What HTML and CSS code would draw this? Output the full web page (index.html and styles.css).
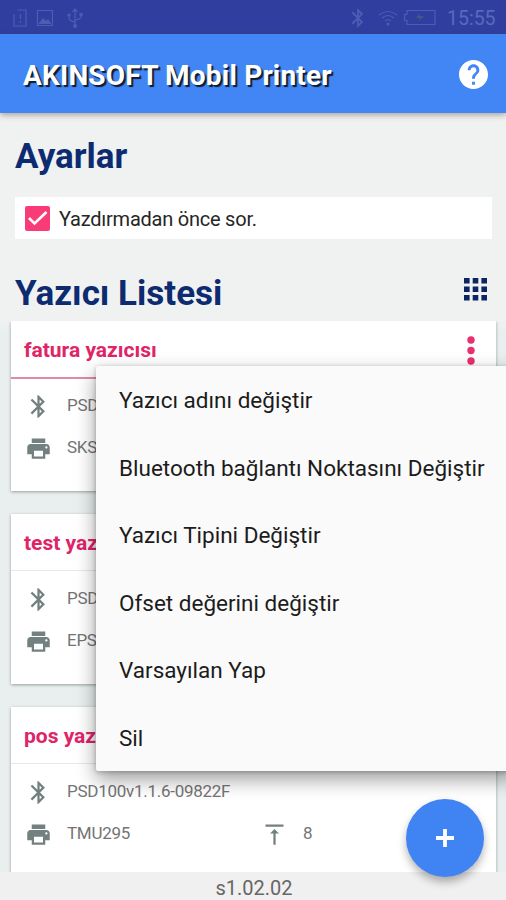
FILE: index.html
```html
<!DOCTYPE html>
<html lang="tr">
<head>
<meta charset="utf-8">
<title>AKINSOFT Mobil Printer</title>
<link rel="stylesheet" href="styles.css">
</head>
<body>
<svg class="defs" aria-hidden="true">
  <symbol id="bt" viewBox="0 0 24 24"><path d="M17.71 7.71L12 2h-1v7.59L6.41 5 5 6.41 10.59 12 5 17.59 6.41 19 11 14.41V22h1l5.71-5.71-4.3-4.29 4.3-4.29zM13 5.83l1.88 1.88L13 9.59V5.83zm1.88 10.46L13 18.17v-3.76l1.88 1.88z"/></symbol>
  <symbol id="printer" viewBox="0 0 24 24"><path d="M19 8H5c-1.66 0-3 1.34-3 3v6h4v4h12v-4h4v-6c0-1.66-1.34-3-3-3zm-3 11H8v-5h8v5zm3-7c-.55 0-1-.45-1-1s.45-1 1-1 1 .45 1 1-.45 1-1 1zm-1-9H6v4h12V3z"/></symbol>
  <symbol id="top" viewBox="0 0 24 24"><path d="M8 11h3v10h2V11h3l-4-4-4 4zM4 3v2h16V3H4z"/></symbol>
</svg>
<div class="screen">
  <header class="status">
    <svg class="s-sim" viewBox="0 0 16 20"><path d="M5.500 2H14v16H2V6M8.500 6v5M8.500 13v2"/></svg>
    <svg class="s-image" viewBox="0 0 18 18"><path d="M1.500 1.500h15v15h-15z"/><path class="solid" d="M3 14l4-5 3 3 2-2 3 4v1H3z"/></svg>
    <svg class="s-usb" viewBox="0 0 18 22"><path d="M9 3v16M3 8v3q0 3 6 4M15 7v3q0 2-6 3M6.500 5L9 2l2.500 3"/><circle class="solid" cx="9" cy="19" r="2"/><circle class="solid" cx="3" cy="8" r="1.600"/><path class="solid" d="M13.500 6h3v3h-3z"/></svg>
    <svg class="s-bt solid" viewBox="0 0 24 24"><use href="#bt"/></svg>
    <svg class="s-wifi" viewBox="0 0 22 18"><path d="M2 6q9-7 18 0M5 9q6-5 12 0M8 12q3-2.500 6 0"/><circle class="solid" cx="11" cy="15" r="1.500"/></svg>
    <svg class="s-battery" viewBox="0 0 34 17"><path d="M4 1.500h28v14H4v-4H1.500v-6H4z"/><path class="charge" d="M16 5l-3 4h4l-1 3 5-5h-4z"/></svg>
    <span class="clock">15:55</span>
  </header>
  <div class="toolbar">
    <h1>AKINSOFT Mobil Printer</h1>
    <svg class="help" viewBox="2 2 20 20"><path d="M12 2C6.480 2 2 6.480 2 12s4.480 10 10 10 10-4.480 10-10S17.520 2 12 2zm1 17h-2v-2h2v2zm2.070-7.750l-.9.920C13.450 12.900 13 13.500 13 15h-2v-.5c0-1.100.45-2.100 1.170-2.830l1.240-1.260c.37-.36.590-.86.590-1.410 0-1.100-.9-2-2-2s-2 .9-2 2H8c0-2.210 1.790-4 4-4s4 1.790 4 4c0 .88-.36 1.680-.93 2.250z"/></svg>
  </div>
  <main class="content">
    <h2 class="settings-title">Ayarlar</h2>
    <label class="setting">
      <svg class="check" viewBox="0 0 25 25"><rect width="25" height="25" rx="2"/><path d="M4 12l5.500 5.500L21.500 6"/></svg>
      <span>Yazdırmadan önce sor.</span>
    </label>
    <div class="list-head">
      <h2 class="list-title">Yazıcı Listesi</h2>
      <svg class="grid" viewBox="0 0 23 23"><path d="M0 0h5.600v5.600H0zM8.700 0h5.600v5.600H8.700zM17.400 0H23v5.600h-5.600zM0 8.500h5.600v5.600H0zM8.700 8.500h5.600v5.600H8.700zM17.400 8.500H23v5.600h-5.600zM0 17h5.600v5.600H0zM8.700 17h5.600v5.600H8.700zM17.400 17H23v5.600h-5.600z"/></svg>
    </div>
    <div class="cards">
      <section class="card active">
        <div class="card-head"><h3>fatura yazıcısı</h3><svg class="more" viewBox="0 0 8 29"><circle cx="4" cy="4" r="3.700"/><circle cx="4" cy="14.500" r="3.700"/><circle cx="4" cy="25" r="3.700"/></svg></div>
        <div class="row"><svg class="icon"><use href="#bt"/></svg><span>PSD</span></div>
        <div class="row"><svg class="icon"><use href="#printer"/></svg><span>SKS</span></div>
      </section>
      <section class="card">
        <div class="card-head"><h3>test yaz</h3></div>
        <div class="row"><svg class="icon"><use href="#bt"/></svg><span>PSD</span></div>
        <div class="row"><svg class="icon"><use href="#printer"/></svg><span>EPS</span></div>
      </section>
      <section class="card">
        <div class="card-head"><h3>pos yaz</h3></div>
        <div class="row"><svg class="icon"><use href="#bt"/></svg><span>PSD100v1.1.6-09822F</span></div>
        <div class="row"><svg class="icon"><use href="#printer"/></svg><span class="model">TMU295</span><svg class="icon"><use href="#top"/></svg><span>8</span></div>
      </section>
    </div>
  </main>
  <footer class="version">s1.02.02</footer>
  <button class="fab" aria-label="Ekle"><svg viewBox="0 0 18 18"><path d="M9 0v18M0 9h18"/></svg></button>
  <ul class="menu">
    <li>Yazıcı adını değiştir</li>
    <li>Bluetooth bağlantı Noktasını Değiştir</li>
    <li>Yazıcı Tipini Değiştir</li>
    <li>Ofset değerini değiştir</li>
    <li>Varsayılan Yap</li>
    <li>Sil</li>
  </ul>
</div>
</body>
</html>
```
FILE: styles.css
```css
* { box-sizing: border-box; margin: 0; padding: 0; }
body { font-family: Roboto, "Liberation Sans", sans-serif; background: #f0f0f0; overflow: hidden; }
svg { display: block; flex: none; }
.defs { position: absolute; width: 0; height: 0; }
.screen { position: relative; width: 506px; height: 900px; display: flex; flex-direction: column; overflow: hidden; background: #f0f1f1; }

.status { height: 34px; flex: none; display: flex; align-items: center; background: #303f9f; padding: 1px 10px 0 12px; color: #5a68bc; }
.status svg { fill: none; stroke: #4e5cb2; stroke-width: 1.2; }
.status .solid { fill: #4e5cb2; stroke: none; }
.s-sim { width: 16px; height: 20px; }
.s-image { width: 18px; height: 18px; margin-left: 8px; }
.s-usb { width: 18px; height: 22px; margin-left: 12px; }
.status .s-bt { width: 22px; height: 22px; margin-left: auto; }
.s-wifi { width: 22px; height: 18px; margin-left: 8px; }
.s-battery { width: 34px; height: 17px; margin-left: 4px; }
.status .charge { fill: #3f5a84; stroke: none; }
.clock { font-size: 19.5px; margin-left: 10px; width: 49px; padding-top: 2px; }

.toolbar { position: relative; height: 79px; flex: none; display: flex; align-items: center; justify-content: space-between; padding: 3px 18px 0 23px; background: #4285f4; box-shadow: 0 2px 6px rgba(70, 50, 30, .42); }
.toolbar h1 { font-size: 28px; letter-spacing: .2px; font-weight: 700; color: #fff; text-shadow: 2px 2px 1px rgba(0, 0, 0, .8); white-space: nowrap; }
.help { width: 29px; height: 29px; fill: #fff; margin-bottom: 2px; }

.content { flex: 1; min-height: 0; display: flex; flex-direction: column; }
h2 { font-size: 35px; font-weight: 700; line-height: 40px; color: #0d2b70; white-space: nowrap; }
.settings-title { margin: 24px 0 0 15px; }
.setting { display: flex; align-items: center; height: 42px; margin: 20px 14px 0 15px; padding-left: 10px; gap: 9px; background: #fff; font-size: 20px; letter-spacing: -.23px; color: #262626; }
.setting span { padding-top: 2px; }
.check { width: 25px; height: 25px; fill: #f93b78; }
.check path { fill: none; stroke: #fff; stroke-width: 2.6; }
.list-head { display: flex; align-items: center; justify-content: space-between; height: 40px; margin: 34px 19px 0 15px; }
.list-title { padding-top: 1px; }
.grid { width: 23px; height: 23px; fill: #0d2463; margin-bottom: 8px; }
.cards { flex: 1; min-height: 0; overflow: hidden; margin-top: 8px; padding: 0 10px 0 11px; display: flex; flex-direction: column; gap: 23px; background: linear-gradient(#f0f1f1, #e9efef 10px); }
.card { flex: none; height: 170px; background: #fff; box-shadow: 0 1px 3px rgba(0, 0, 0, .35); }
.card-head { display: flex; align-items: center; justify-content: space-between; height: 57px; border-bottom: 1px solid #e8e8e8; padding: 2px 21px 0 13px; margin-bottom: 7px; }
.card.active .card-head { border-bottom: 2px solid #e08ba4; height: 58px; margin-bottom: 6px; }
.card h3 { font-size: 21px; font-weight: 700; color: #e02468; }
.more { width: 8px; height: 29px; fill: #ea2e6e; }
.row { display: flex; align-items: center; height: 42.500px; padding-left: 14px; font-size: 17px; letter-spacing: -.27px; color: #747474; }
.row span { padding-bottom: 3px; }
.icon { width: 27px; height: 27px; fill: #738080; margin-right: 15px; }
.model { width: 194px; }
.version { height: 28px; flex: none; text-align: center; font-size: 20px; line-height: 32px; color: #666; background: #f0f0f0; padding-left: 2px; }

.fab { position: absolute; left: 406px; top: 799px; width: 78px; height: 78px; border: 0; border-radius: 50%; background: #4083f2; display: flex; align-items: center; justify-content: center; box-shadow: 0 5px 8px rgba(0, 0, 0, .3); }
.fab svg { width: 18px; height: 18px; stroke: #fff; stroke-width: 3.8; }
.menu { position: absolute; left: 96px; top: 366px; width: 420px; height: 405px; list-style: none; background: #fafafa; border-radius: 2px; box-shadow: 0 8px 20px rgba(0, 0, 0, .4), 0 1px 4px rgba(0, 0, 0, .22); }
.menu li { height: 67.500px; line-height: 68px; padding-left: 23px; font-size: 22.500px; color: #1c1c1c; white-space: nowrap; }
```
